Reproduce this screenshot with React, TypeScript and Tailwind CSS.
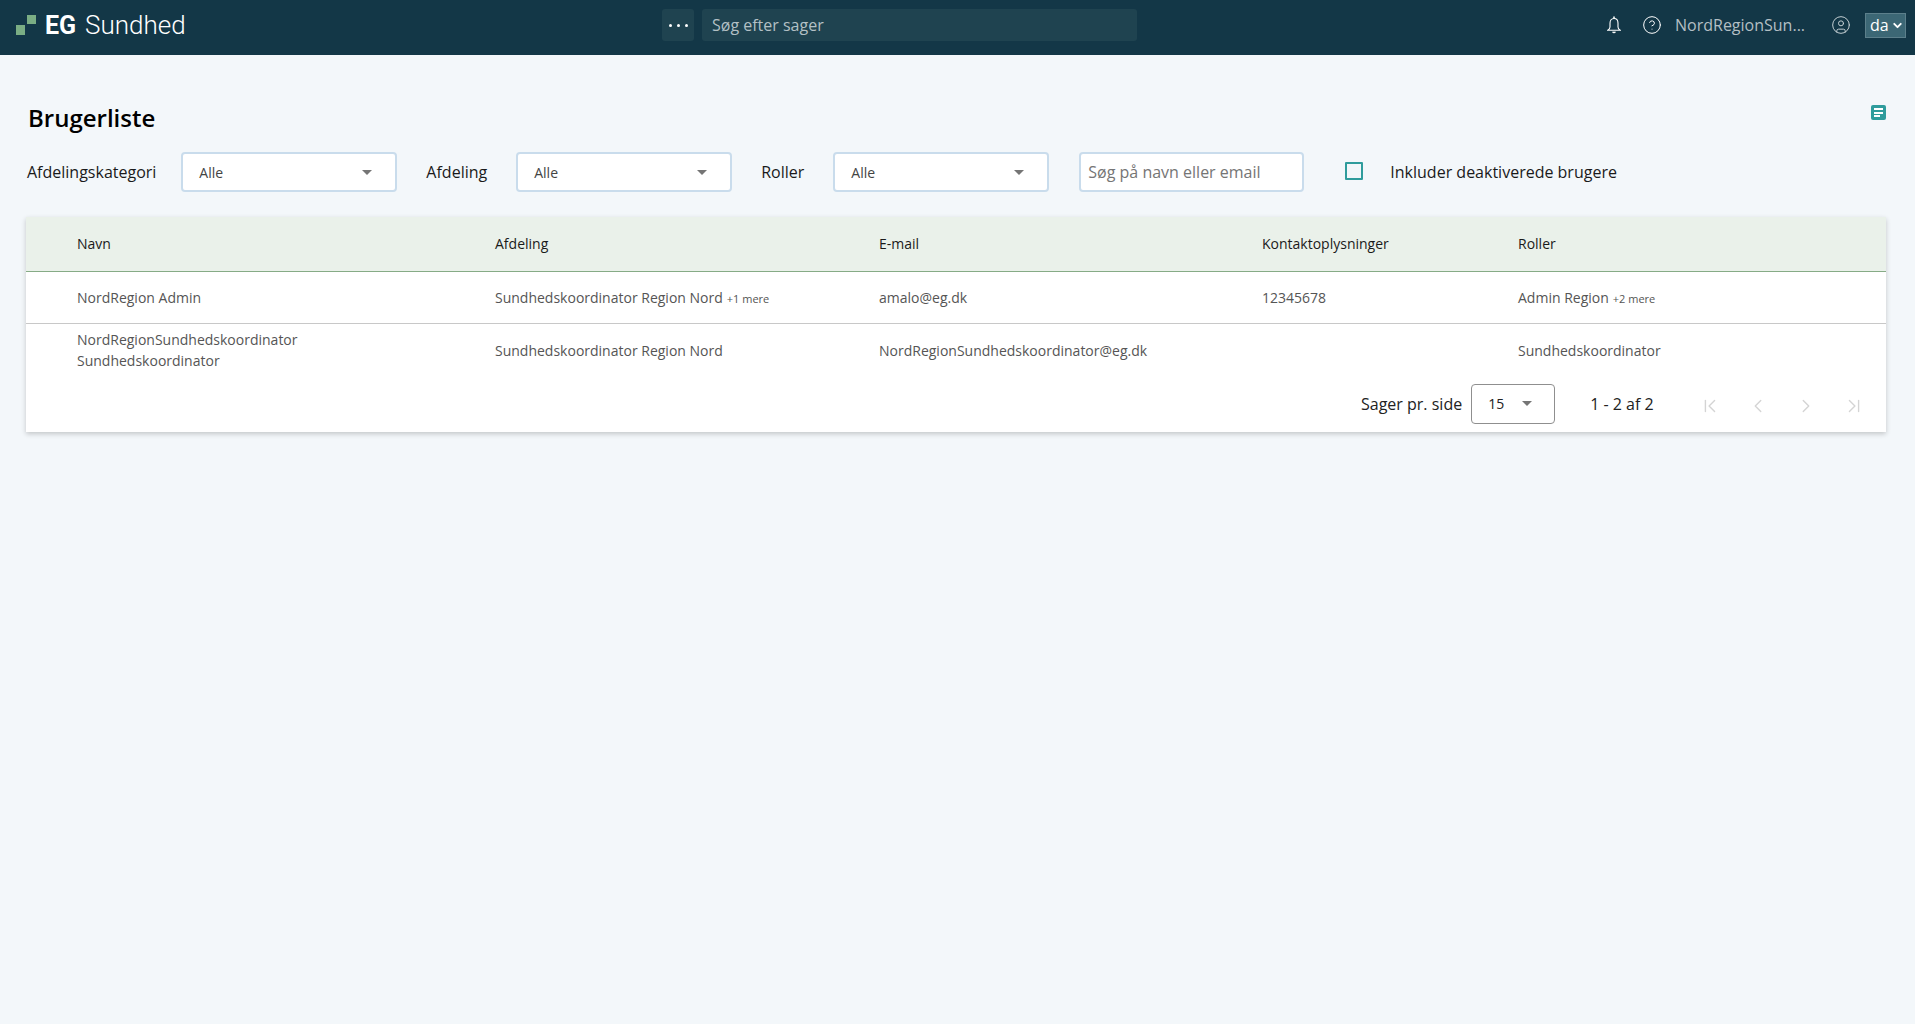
import { ChevronDown, ChevronLeft, ChevronRight, ChevronFirst, ChevronLast, CircleHelp, CircleUser } from "lucide-react";

const font = "font-['Open_Sans',sans-serif]";
const gridCols = "grid grid-cols-[418px_384px_383px_256px_1fr] pl-[51px] items-center";

const users = [
  {
    name: ["NordRegion Admin"],
    department: "Sundhedskoordinator Region Nord",
    departmentMore: "+1 mere",
    email: "amalo@eg.dk",
    contact: "12345678",
    role: "Admin Region",
    roleMore: "+2 mere",
  },
  {
    name: ["NordRegionSundhedskoordinator", "Sundhedskoordinator"],
    department: "Sundhedskoordinator Region Nord",
    email: "NordRegionSundhedskoordinator@eg.dk",
    contact: "",
    role: "Sundhedskoordinator",
  },
];

function Caret() {
  return <span className="w-0 h-0 border-x-[5px] border-x-transparent border-t-[5px] border-t-[#757575]" />;
}

function FilterSelect({ className }: { className: string }) {
  return (
    <div className={`${className} w-[216px] h-10 bg-white border-2 border-[#c9dcec] rounded-[4px] flex items-center justify-between pl-4 pr-[23px] pt-[1px] text-sm text-[#444]`}>
      <span>Alle</span>
      <Caret />
    </div>
  );
}

function BellIcon() {
  return (
    <svg width="14" height="18" viewBox="0 0 14 18" fill="none" stroke="white" strokeWidth="1.1">
      <path d="M7 2.5C4.4 2.5 3 4.6 3 7.2V11c0 1.4-.8 2.4-2.2 3.2h12.4C11.8 13.4 11 12.4 11 11V7.2C11 4.6 9.6 2.5 7 2.5Z" />
      <path d="M7 .5v2" strokeWidth="1.6" />
      <path d="M5.6 15.8c.3.7.8 1 1.4 1s1.1-.3 1.4-1" fill="white" />
    </svg>
  );
}

function Header() {
  return (
    <div className="h-[55px] pb-[5px] bg-[#133747] flex items-center text-white">
      {/* Logo */}
      <div className="w-[662px] flex items-center pl-4">
        <svg width="21" height="21" viewBox="0 0 21 21">
          <rect x="0" y="10" width="9" height="10" fill="#7aad84" />
          <rect x="11" y="0" width="9" height="9" fill="#7aad84" />
        </svg>
        <span className="ml-[8px] text-[25px] leading-none font-bold font-['Roboto',sans-serif]">EG</span>
        <span className="ml-[9px] text-[26px] leading-none font-light font-['Roboto',sans-serif]">Sundhed</span>
      </div>

      {/* Search */}
      <div className="w-8 h-8 bg-[#1f4350] rounded-[3px] flex items-center justify-center gap-[5px]">
        <span className="w-[3px] h-[3px] rounded-full bg-white" />
        <span className="w-[3px] h-[3px] rounded-full bg-white" />
        <span className="w-[3px] h-[3px] rounded-full bg-white" />
      </div>
      <div className="ml-2 w-[435px] h-8 bg-[#1f4350] rounded-[3px] flex items-center pl-[10px] text-base text-[#b3c0c5]">
        Søg efter sager
      </div>

      {/* Right side */}
      <div className="ml-auto flex items-center pr-[9px]">
        <BellIcon />
        <CircleHelp size={20} strokeWidth={1.2} className="ml-[21px]" />
        <span className="ml-[13px] w-[130px] text-base text-[#b3bfc4] whitespace-nowrap">NordRegionSun...</span>
        <CircleUser size={20} strokeWidth={1.2} className="ml-[26px] text-[#c3ced2]" />
        <div className="ml-[14px] w-[41px] h-[25px] bg-[#3c6775] border border-[#5c7f8b] flex items-center pl-[4px] text-base">
          da
          <ChevronDown size={13} strokeWidth={3.5} className="ml-[2px]" />
        </div>
      </div>
    </div>
  );
}

function Filters() {
  return (
    <div className="flex items-center h-10 mt-[3px] pl-[27px] text-base text-[#1a1a1a]">
      <span>Afdelingskategori</span>
      <FilterSelect className="ml-[25px]" />
      <span className="ml-[29px]">Afdeling</span>
      <FilterSelect className="ml-[29px]" />
      <span className="ml-[29px]">Roller</span>
      <FilterSelect className="ml-[29px]" />
      <div className="ml-[30px] w-[225px] h-10 bg-white border-2 border-[#c9dcec] rounded-[4px] flex items-center pl-[7px] text-[#757575]">
        Søg på navn eller email
      </div>
      <span className="ml-[41px] w-[18px] h-[18px] border-2 border-[#2f9c9c] rounded-[1px] mt-[-2px]" />
      <span className="ml-[27px]">Inkluder deaktiverede brugere</span>
    </div>
  );
}

function UserTable() {
  return (
    <div className="mt-[25px] ml-[26px] mr-[29px] bg-white shadow-[0_2px_5px_rgba(0,0,0,0.2)] text-sm">
      <div className={`${gridCols} h-[55px] bg-[#eaf1ea] border-b border-[#86ab86] text-[#1a1a1a]`}>
        <span>Navn</span>
        <span>Afdeling</span>
        <span>E-mail</span>
        <span>Kontaktoplysninger</span>
        <span>Roller</span>
      </div>
      {users.map((user, i) => (
        <div
          key={i}
          className={`${gridCols} text-[#555] ${i === 0 ? "h-[52px] border-b border-[#c8c8c8]" : "h-[52px] leading-[21px]"}`}
        >
          <div>
            {user.name.map((line) => (
              <div key={line}>{line}</div>
            ))}
          </div>
          <div>
            {user.department}
            {user.departmentMore && <span className="ml-1 text-[11px]">{user.departmentMore}</span>}
          </div>
          <div>{user.email}</div>
          <div>{user.contact}</div>
          <div>
            {user.role}
            {user.roleMore && <span className="ml-1 text-[11px]">{user.roleMore}</span>}
          </div>
        </div>
      ))}

      {/* Pagination */}
      <div className="h-[56px] flex items-center pl-[1335px] pb-[1px] text-base text-[#222]">
        <span>Sager pr. side</span>
        <div className="ml-[9px] w-[84px] h-10 border border-[#8f8f8f] rounded-[4px] flex items-center justify-between pl-4 pr-[22px] text-sm">
          <span>15</span>
          <Caret />
        </div>
        <span className="ml-[35px]">1 - 2 af 2</span>
        <div className="ml-[45px] flex items-center gap-[26px] text-[#d4d4d4] mt-[4px]">
          <ChevronFirst size={22} strokeWidth={1.5} />
          <ChevronLeft size={22} strokeWidth={1.5} />
          <ChevronRight size={22} strokeWidth={1.5} />
          <ChevronLast size={22} strokeWidth={1.5} />
        </div>
      </div>
    </div>
  );
}

export default function App() {
  return (
    <div className={`${font} min-h-[1024px] bg-[#f3f7fa]`}>
      <Header />
      <div className="flex items-start justify-between h-[48px] pt-[46px] pl-[28px] pr-[29px] box-content">
        <h1 className="text-2xl leading-8 font-semibold text-black mt-[1px]">Brugerliste</h1>
        <div className="w-[15px] h-[15px] mt-[4px] bg-[#2f9c9c] rounded-[2px] flex flex-col justify-center gap-[1.5px] pl-[3px]">
          <span className="w-[9px] h-[2px] bg-white" />
          <span className="w-[9px] h-[2px] bg-white" />
          <span className="w-[6px] h-[2px] bg-white" />
        </div>
      </div>
      <Filters />
      <UserTable />
    </div>
  );
}
